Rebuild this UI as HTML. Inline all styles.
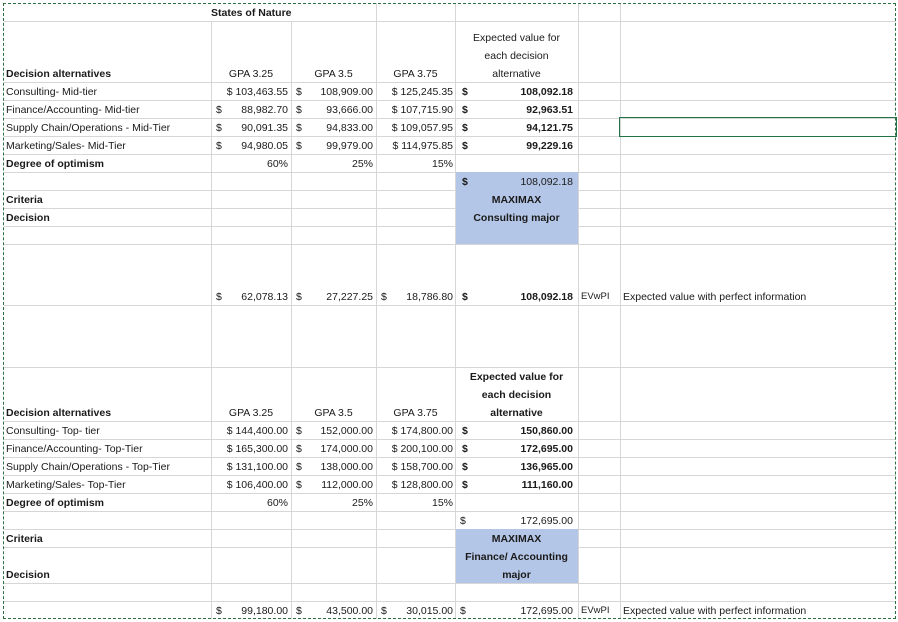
<!DOCTYPE html>
<html><head><meta charset="utf-8"><style>
body{margin:0;width:898px;height:622px;background:#fff;position:relative;overflow:hidden;font-family:"Liberation Sans",sans-serif;font-size:10.5px;color:#1a1a1a}
.h{position:absolute;left:4px;width:892px;height:1px;background:#d6d6d6}
.v{position:absolute;width:1px;background:#d6d6d6}
.b{position:absolute;background:#b4c6e7}
.t{position:absolute;white-space:nowrap;line-height:18px;height:18px}
.bd{font-weight:bold}
.c{text-align:center}
.r{text-align:right}
</style></head><body>
<!-- horizontal gridlines -->
<div class="h" style="top:21px"></div><div class="h" style="top:82px"></div><div class="h" style="top:100px"></div><div class="h" style="top:118px"></div><div class="h" style="top:136px"></div><div class="h" style="top:154px"></div><div class="h" style="top:172px"></div><div class="h" style="top:190px"></div><div class="h" style="top:208px"></div><div class="h" style="top:226px"></div><div class="h" style="top:244px"></div><div class="h" style="top:305px"></div><div class="h" style="top:367px"></div><div class="h" style="top:421px"></div><div class="h" style="top:439px"></div><div class="h" style="top:457px"></div><div class="h" style="top:475px"></div><div class="h" style="top:493px"></div><div class="h" style="top:511px"></div><div class="h" style="top:529px"></div><div class="h" style="top:547px"></div><div class="h" style="top:583px"></div><div class="h" style="top:601px"></div>
<!-- vertical gridlines -->
<div class="v" style="left:211px;top:21px;height:598px"></div>
<div class="v" style="left:291px;top:21px;height:598px"></div>
<div class="v" style="left:376px;top:3px;height:616px"></div>
<div class="v" style="left:455px;top:3px;height:616px"></div>
<div class="v" style="left:578px;top:3px;height:616px"></div>
<div class="v" style="left:620px;top:3px;height:616px"></div>
<!-- blue fills -->
<div class="b" style="left:456px;top:172px;width:122px;height:72px"></div>
<div class="b" style="left:456px;top:529px;width:122px;height:54px"></div>
<!-- dashed border -->
<div style="position:absolute;left:3px;top:3px;width:891px;height:614px;border:1px dashed #2e6f40"></div>
<!-- selected cell -->
<div style="position:absolute;left:619px;top:117px;width:276px;height:18px;border:1px solid #217346"></div>

<div class="t bd c" style="left:211px;top:4px;width:80px">States of Nature</div>

<!-- Top header -->
<div class="t bd" style="left:6px;top:65px">Decision alternatives</div>
<div class="t c" style="left:211px;top:65px;width:80px">GPA 3.25</div>
<div class="t c" style="left:291px;top:65px;width:85px">GPA 3.5</div>
<div class="t c" style="left:376px;top:65px;width:79px">GPA 3.75</div>
<div class="t c" style="left:455px;top:29px;width:123px">Expected value for</div>
<div class="t c" style="left:455px;top:47px;width:123px">each decision</div>
<div class="t c" style="left:455px;top:65px;width:123px">alternative</div>

<!-- Top rows -->
<div class="t" style="left:6px;top:83px">Consulting- Mid-tier</div>
<div class="t" style="left:6px;top:101px">Finance/Accounting- Mid-tier</div>
<div class="t" style="left:6px;top:119px">Supply Chain/Operations - Mid-Tier</div>
<div class="t" style="left:6px;top:137px">Marketing/Sales- Mid-Tier</div>
<div class="t bd" style="left:6px;top:155px">Degree of optimism</div>
<div class="t bd" style="left:6px;top:191px">Criteria</div>
<div class="t bd" style="left:6px;top:209px">Decision</div>

<div class="t r" style="left:211px;top:83px;width:77px">$ 103,463.55</div>
<div class="t" style="left:216px;top:101px">$</div><div class="t r" style="left:211px;top:101px;width:77px">88,982.70</div>
<div class="t" style="left:216px;top:119px">$</div><div class="t r" style="left:211px;top:119px;width:77px">90,091.35</div>
<div class="t" style="left:216px;top:137px">$</div><div class="t r" style="left:211px;top:137px;width:77px">94,980.05</div>
<div class="t r" style="left:211px;top:155px;width:77px">60%</div>

<div class="t" style="left:296px;top:83px">$</div><div class="t r" style="left:291px;top:83px;width:82px">108,909.00</div>
<div class="t" style="left:296px;top:101px">$</div><div class="t r" style="left:291px;top:101px;width:82px">93,666.00</div>
<div class="t" style="left:296px;top:119px">$</div><div class="t r" style="left:291px;top:119px;width:82px">94,833.00</div>
<div class="t" style="left:296px;top:137px">$</div><div class="t r" style="left:291px;top:137px;width:82px">99,979.00</div>
<div class="t r" style="left:291px;top:155px;width:82px">25%</div>

<div class="t r" style="left:376px;top:83px;width:77px">$ 125,245.35</div>
<div class="t r" style="left:376px;top:101px;width:77px">$ 107,715.90</div>
<div class="t r" style="left:376px;top:119px;width:77px">$ 109,057.95</div>
<div class="t r" style="left:376px;top:137px;width:77px">$ 114,975.85</div>
<div class="t r" style="left:376px;top:155px;width:77px">15%</div>

<div class="t bd" style="left:462px;top:83px">$</div><div class="t bd r" style="left:455px;top:83px;width:118px">108,092.18</div>
<div class="t bd" style="left:462px;top:101px">$</div><div class="t bd r" style="left:455px;top:101px;width:118px">92,963.51</div>
<div class="t bd" style="left:462px;top:119px">$</div><div class="t bd r" style="left:455px;top:119px;width:118px">94,121.75</div>
<div class="t bd" style="left:462px;top:137px">$</div><div class="t bd r" style="left:455px;top:137px;width:118px">99,229.16</div>
<div class="t bd" style="left:462px;top:173px">$</div><div class="t r" style="left:455px;top:173px;width:118px">108,092.18</div>
<div class="t bd c" style="left:455px;top:191px;width:123px">MAXIMAX</div>
<div class="t bd c" style="left:455px;top:209px;width:123px">Consulting major</div>

<!-- EVwPI top -->
<div class="t" style="left:216px;top:288px">$</div><div class="t r" style="left:211px;top:288px;width:77px">62,078.13</div>
<div class="t" style="left:296px;top:288px">$</div><div class="t r" style="left:291px;top:288px;width:82px">27,227.25</div>
<div class="t" style="left:381px;top:288px">$</div><div class="t r" style="left:376px;top:288px;width:77px">18,786.80</div>
<div class="t bd" style="left:462px;top:288px">$</div><div class="t bd r" style="left:455px;top:288px;width:118px">108,092.18</div>
<div class="t" style="left:581px;top:288px;font-size:9.5px">EVwPI</div>
<div class="t" style="left:623px;top:288px">Expected value with perfect information</div>

<!-- Bottom header -->
<div class="t bd" style="left:6px;top:404px">Decision alternatives</div>
<div class="t c" style="left:211px;top:404px;width:80px">GPA 3.25</div>
<div class="t c" style="left:291px;top:404px;width:85px">GPA 3.5</div>
<div class="t c" style="left:376px;top:404px;width:79px">GPA 3.75</div>
<div class="t bd c" style="left:455px;top:368px;width:123px">Expected value for</div>
<div class="t bd c" style="left:455px;top:386px;width:123px">each decision</div>
<div class="t bd c" style="left:455px;top:404px;width:123px">alternative</div>

<div class="t" style="left:6px;top:422px">Consulting- Top- tier</div>
<div class="t" style="left:6px;top:440px">Finance/Accounting- Top-Tier</div>
<div class="t" style="left:6px;top:458px">Supply Chain/Operations - Top-Tier</div>
<div class="t" style="left:6px;top:476px">Marketing/Sales- Top-Tier</div>
<div class="t bd" style="left:6px;top:494px">Degree of optimism</div>
<div class="t bd" style="left:6px;top:530px">Criteria</div>
<div class="t bd" style="left:6px;top:566px">Decision</div>

<div class="t r" style="left:211px;top:422px;width:77px">$ 144,400.00</div>
<div class="t r" style="left:211px;top:440px;width:77px">$ 165,300.00</div>
<div class="t r" style="left:211px;top:458px;width:77px">$ 131,100.00</div>
<div class="t r" style="left:211px;top:476px;width:77px">$ 106,400.00</div>
<div class="t r" style="left:211px;top:494px;width:77px">60%</div>

<div class="t" style="left:296px;top:422px">$</div><div class="t r" style="left:291px;top:422px;width:82px">152,000.00</div>
<div class="t" style="left:296px;top:440px">$</div><div class="t r" style="left:291px;top:440px;width:82px">174,000.00</div>
<div class="t" style="left:296px;top:458px">$</div><div class="t r" style="left:291px;top:458px;width:82px">138,000.00</div>
<div class="t" style="left:296px;top:476px">$</div><div class="t r" style="left:291px;top:476px;width:82px">112,000.00</div>
<div class="t r" style="left:291px;top:494px;width:82px">25%</div>

<div class="t r" style="left:376px;top:422px;width:77px">$ 174,800.00</div>
<div class="t r" style="left:376px;top:440px;width:77px">$ 200,100.00</div>
<div class="t r" style="left:376px;top:458px;width:77px">$ 158,700.00</div>
<div class="t r" style="left:376px;top:476px;width:77px">$ 128,800.00</div>
<div class="t r" style="left:376px;top:494px;width:77px">15%</div>

<div class="t bd" style="left:462px;top:422px">$</div><div class="t bd r" style="left:455px;top:422px;width:118px">150,860.00</div>
<div class="t bd" style="left:462px;top:440px">$</div><div class="t bd r" style="left:455px;top:440px;width:118px">172,695.00</div>
<div class="t bd" style="left:462px;top:458px">$</div><div class="t bd r" style="left:455px;top:458px;width:118px">136,965.00</div>
<div class="t bd" style="left:462px;top:476px">$</div><div class="t bd r" style="left:455px;top:476px;width:118px">111,160.00</div>
<div class="t" style="left:460px;top:512px">$</div><div class="t r" style="left:455px;top:512px;width:118px">172,695.00</div>
<div class="t bd c" style="left:455px;top:530px;width:123px">MAXIMAX</div>
<div class="t bd c" style="left:455px;top:548px;width:123px">Finance/ Accounting</div>
<div class="t bd c" style="left:455px;top:566px;width:123px">major</div>

<div class="t" style="left:216px;top:602px">$</div><div class="t r" style="left:211px;top:602px;width:77px">99,180.00</div>
<div class="t" style="left:296px;top:602px">$</div><div class="t r" style="left:291px;top:602px;width:82px">43,500.00</div>
<div class="t" style="left:381px;top:602px">$</div><div class="t r" style="left:376px;top:602px;width:77px">30,015.00</div>
<div class="t" style="left:460px;top:602px">$</div><div class="t r" style="left:455px;top:602px;width:118px">172,695.00</div>
<div class="t" style="left:581px;top:602px;font-size:9.5px">EVwPI</div>
<div class="t" style="left:623px;top:602px">Expected value with perfect information</div>
</body></html>
